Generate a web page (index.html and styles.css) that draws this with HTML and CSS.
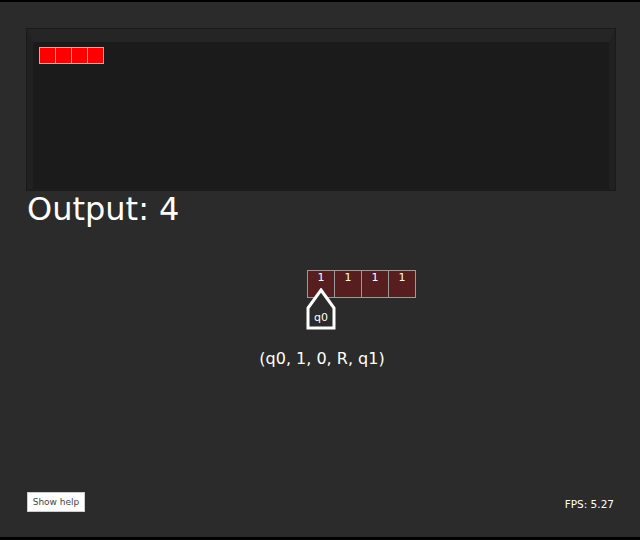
FILE: index.html
```html
<!DOCTYPE html>
<html>
<head>
<meta charset="utf-8">
<link rel="stylesheet" href="styles.css">
</head>
<body>
<div class="app">
  <div class="panel">
    <div class="out-tape">
      <div class="ocell"></div><div class="ocell"></div><div class="ocell"></div><div class="ocell"></div>
    </div>
  </div>
  <div class="output">Output: 4</div>
  <div class="stage">
    <div class="tape-col">
      <div class="tape">
        <div class="cell">1</div><div class="cell">1</div><div class="cell">1</div><div class="cell">1</div>
      </div>
      <div class="head">
        <svg width="32" height="42" viewBox="0 0 32 42">
          <path d="M16 2 L29 20 L29 40 L3 40 L3 20 Z" fill="#2b2b2b" stroke="#fff" stroke-width="3" stroke-linejoin="miter"/>
        </svg>
        <span class="state">q0</span>
      </div>
    </div>
    <div class="rule">(q0, 1, 0, R, q1)</div>
  </div>
  <div class="footer">
    <button class="help">Show help</button>
    <div class="fps">FPS: 5.27</div>
  </div>
</div>
</body>
</html>
```
FILE: styles.css
```css
html, body {
  margin: 0;
  padding: 0;
  background: #000;
  height: 540px;
  overflow: hidden;
}
.app {
  box-sizing: border-box;
  margin-top: 2px;
  height: 535px;
  background: #2b2b2b;
  padding: 27px 25px 0 27px;
  display: flex;
  flex-direction: column;
  font-family: "DejaVu Sans", sans-serif;
  color: #fff;
}
.panel {
  box-sizing: border-box;
  width: 588px;
  height: 161px;
  background: #1b1b1b;
  border-style: solid;
  border-width: 13px 6px 1px 6px;
  border-color: #252525 #212121 #1e1e1e #212121;
  box-shadow: 0 0 0 1px #1a1a1a;
  padding: 5px 0 0 6px;
}
.out-tape {
  display: flex;
}
.ocell {
  box-sizing: border-box;
  width: 17px;
  height: 17px;
  background: #ff0000;
  border: 1px solid #f39a9a;
}
.ocell + .ocell { border-left: none; width: 16px; }
.output {
  font-size: 32px;
  line-height: 38px;
  margin-top: 0px;
}
.stage {
  display: flex;
  flex-direction: column;
  align-items: center;
  margin-top: 42px;
  margin-right: -2px;
}
.tape-col {
  display: flex;
  flex-direction: column;
  align-items: flex-start;
  margin-left: 79px;
}
.tape {
  display: flex;
  border-top: 1px solid #9a9a9a;
  border-left: 1px solid #9a9a9a;
}
.cell {
  box-sizing: border-box;
  width: 27px;
  height: 27px;
  background: #561e1e;
  border-right: 1px solid #9a9a9a;
  border-bottom: 1px solid #9a9a9a;
  font-size: 11px;
  line-height: 13px;
  text-align: center;
  color: #fff;
}
.head {
  position: relative;
  margin-top: -10px;
  margin-left: -2px;
  width: 32px;
  height: 42px;
}
.head svg { display: block; }
.state {
  position: absolute;
  left: 0;
  right: 0;
  top: 23px;
  text-align: center;
  font-size: 11px;
  color: #fff;
}
.rule {
  margin-top: 19px;
  font-size: 16px;
  color: #fff;
}
.footer {
  margin-top: auto;
  margin-bottom: 25px;
  display: flex;
  justify-content: space-between;
  align-items: center;
}
.help {
  font-family: "DejaVu Sans", sans-serif;
  font-size: 9px;
  color: #444;
  background: #fff;
  border: 1px solid #ccc;
  border-radius: 0;
  height: 20px;
  width: 58px;
  padding: 0;
}
.fps {
  font-size: 10.5px;
  color: #fff;
  margin-right: 1px;
  margin-top: 4px;
}
```
